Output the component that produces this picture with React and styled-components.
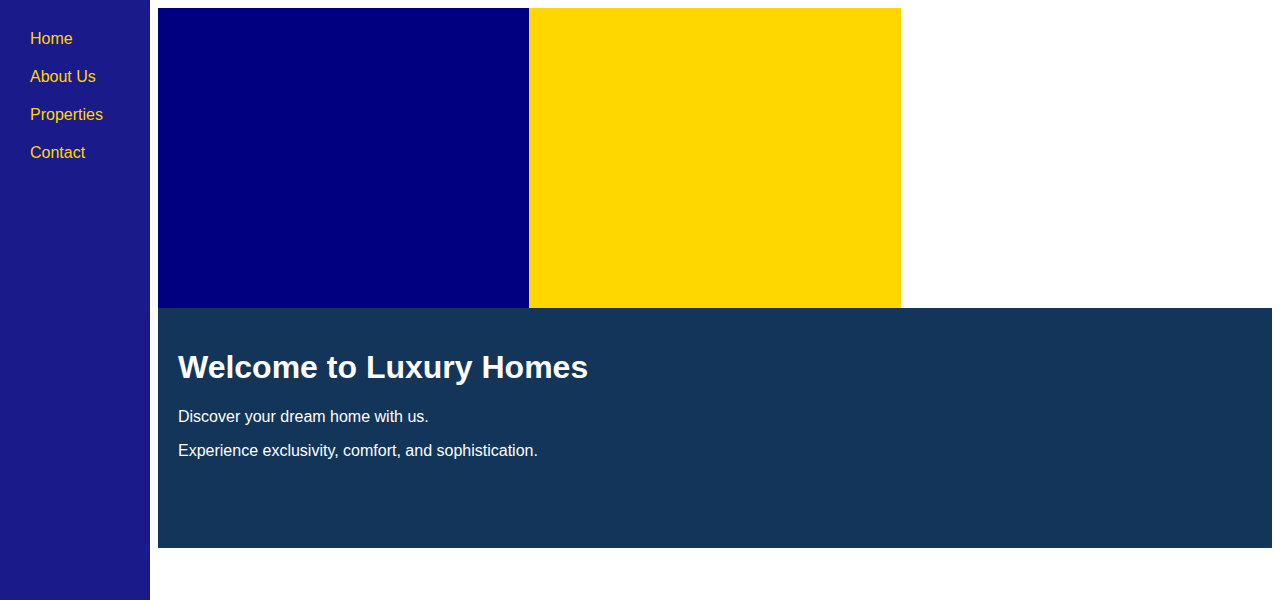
import React from "react";
import styled, { createGlobalStyle } from "styled-components";

const GlobalStyle = createGlobalStyle`
  body {
    margin: 8px;
    font-family: "Liberation Sans", Arial, sans-serif;
    background: #fff;
  }
`;

const Sidebar = styled.nav`
  position: fixed;
  top: 0;
  left: 0;
  width: 150px;
  height: 100%;
  background: #1b1a8a;
  box-sizing: border-box;
  padding-top: 20px;
`;

const NavList = styled.ul`
  list-style: none;
  margin: 0;
  padding: 0;
`;

const NavItem = styled.li`
  padding: 10px 30px;
  font-size: 16px;

  a {
    color: #ffd700;
    text-decoration: none;
  }
`;

const Main = styled.main`
  margin-left: 150px;
`;

const Banner = styled.div`
  display: grid;
  grid-template-columns: repeat(3, 1fr);
  height: 300px;
`;

const Block = styled.div`
  background: ${(p) => p.color};
`;

const Hero = styled.section`
  height: 240px;
  box-sizing: border-box;
  padding: 20px;
  background: #13355a;
  color: #fff;

  h1 {
    font-size: 32px;
    margin: 0.67em 0;
  }
  p {
    font-size: 16px;
    margin: 1em 0;
  }
`;

const links = ["Home", "About Us", "Properties", "Contact"];

const App = () => {
  return (
    <>
      <GlobalStyle />
      <Sidebar>
        <NavList>
          {links.map((l) => (
            <NavItem key={l}>
              <a href="#">{l}</a>
            </NavItem>
          ))}
        </NavList>
      </Sidebar>
      <Main>
        <Banner>
          <Block color="#000080" />
          <Block color="#ffd700" />
          <Block color="#ffffff" />
        </Banner>
        <Hero>
          <h1>Welcome to Luxury Homes</h1>
          <p>Discover your dream home with us.</p>
          <p>Experience exclusivity, comfort, and sophistication.</p>
        </Hero>
      </Main>
    </>
  );
};

export default App;
